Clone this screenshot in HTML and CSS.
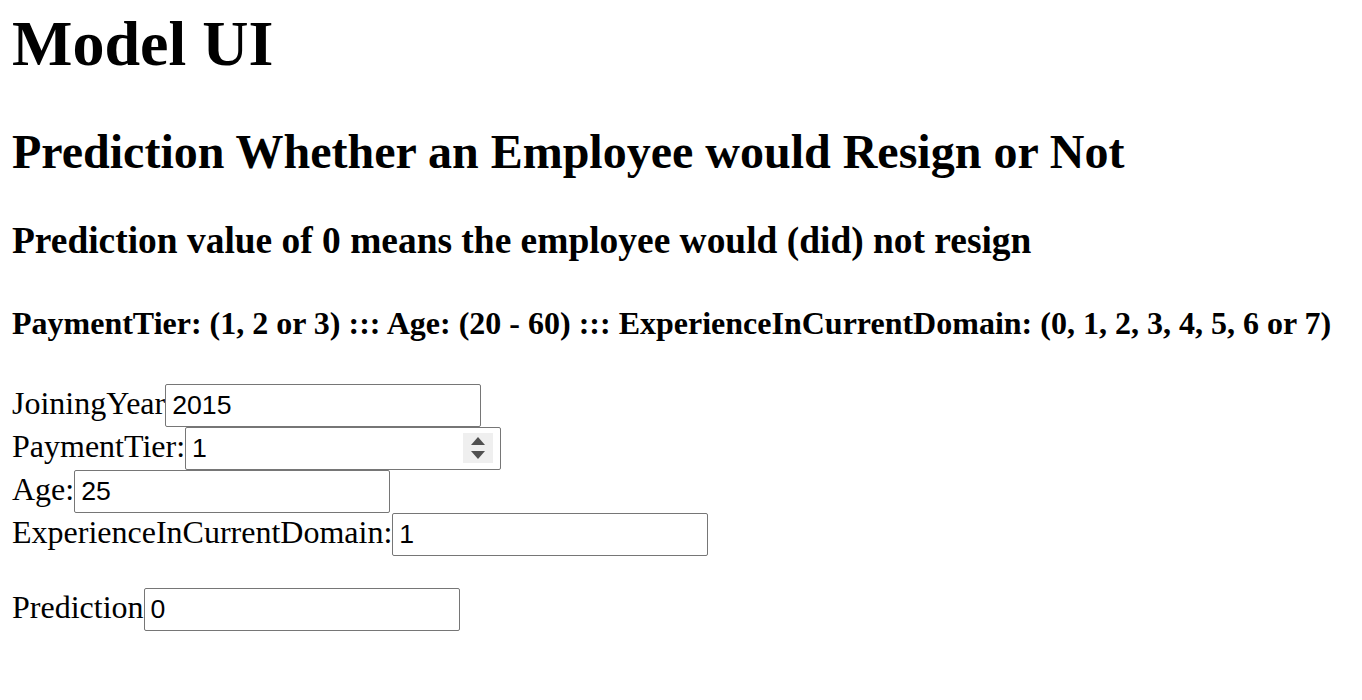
FILE: index.html
```html
<!DOCTYPE html>
<html>
<head>
<meta charset="utf-8">
<title>Model UI</title>
<link rel="stylesheet" href="styles.css">
</head>
<body>
<h1 class="title">Model UI</h1>
<h2 class="subtitle">Prediction Whether an Employee would Resign or Not</h2>
<h3 class="note">Prediction value of 0 means the employee would (did) not resign</h3>
<h4 class="ranges">PaymentTier: (1, 2 or 3) ::: Age: (20 - 60) ::: ExperienceInCurrentDomain: (0, 1, 2, 3, 4, 5, 6 or 7)</h4>
<form class="form">
  <div class="row"><label class="lbl" for="jy">JoiningYear</label><input class="field" id="jy" type="text" value="2015"></div>
  <div class="row"><label class="lbl" for="pt">PaymentTier:</label><span class="spin-wrap"><input class="field" id="pt" type="text" value="1"><span class="spinner"><span class="arr up"></span><span class="arr down"></span></span></span></div>
  <div class="row"><label class="lbl" for="age">Age:</label><input class="field" id="age" type="text" value="25"></div>
  <div class="row"><label class="lbl" for="exp">ExperienceInCurrentDomain:</label><input class="field" id="exp" type="text" value="1"></div>
</form>
<div class="row result"><label class="lbl" for="pred">Prediction</label><input class="field" id="pred" type="text" value="0"></div>
</body>
</html>
```
FILE: styles.css
```css
html { background: #fff; }
body {
  margin: 0 12px;
  font-family: "Liberation Serif", "Times New Roman", serif;
  font-size: 32px;
  color: #000;
}
.title { font-size: 64px; margin: 7px 0 43px; }
.subtitle { font-size: 48px; margin: 40px 0; }
.note { font-size: 37.44px; margin: 38px 0; }
.ranges { font-size: 32px; margin: 43px 0 42px; }
.form { margin: 0 0 32px; }
.row {
  display: flex;
  align-items: baseline;
  height: 43px;
}
.lbl { white-space: nowrap; }
.field {
  box-sizing: border-box;
  width: 316px;
  height: 43px;
  margin: 0;
  padding: 0 6px;
  border: 1px solid #767676;
  border-radius: 2px;
  font-family: "Liberation Sans", Arial, sans-serif;
  font-size: 26.67px;
  color: #000;
  background: #fff;
  outline: none;
}
.spin-wrap { position: relative; display: inline-block; }
.spinner {
  position: absolute;
  right: 8px;
  top: 6px;
  width: 30px;
  height: 30px;
  background: #efefef;
  display: flex;
  flex-direction: column;
  align-items: center;
  justify-content: center;
  gap: 6px;
}
.arr { width: 0; height: 0; border-left: 7px solid transparent; border-right: 7px solid transparent; }
.arr.up { border-bottom: 8px solid #505050; }
.arr.down { border-top: 8px solid #505050; }
```
